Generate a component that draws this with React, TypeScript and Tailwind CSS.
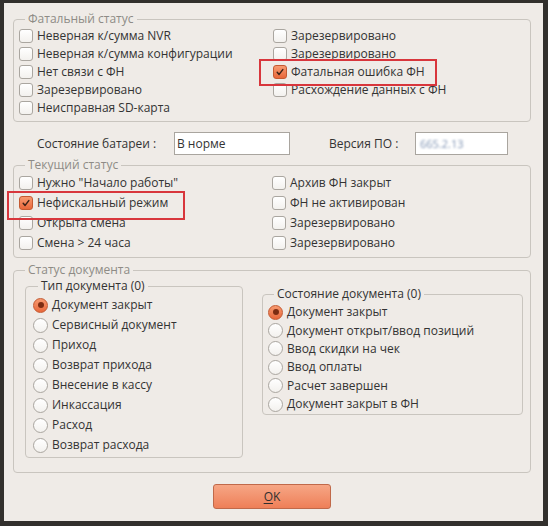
import React from "react";

const FONT = { fontFamily: '"Open Sans", "DejaVu Sans", sans-serif' };

function Check({ checked }: { checked?: boolean }) {
  return checked ? (
    <span className="w-[14px] h-[14px] rounded-[3px] border border-[#c45a32] bg-linear-to-b from-[#f79a70] to-[#e8673a] flex items-center justify-center shrink-0">
      <svg width="10" height="10" viewBox="0 0 10 10">
        <path d="M2.2 5.2 L4.1 7.4 L7.8 2.6" stroke="#3a2217" strokeWidth="1.5" fill="none" strokeLinecap="round" strokeLinejoin="round" />
      </svg>
    </span>
  ) : (
    <span className="w-[14px] h-[14px] rounded-[3px] border border-[#aaa6a0] bg-linear-to-b from-white to-[#f3f1ee] shrink-0" />
  );
}

function Radio({ checked }: { checked?: boolean }) {
  return checked ? (
    <span className="w-[15px] h-[15px] rounded-full border border-[#c45a32] bg-linear-to-b from-[#f79a70] to-[#e8673a] flex items-center justify-center shrink-0">
      <span className="w-[6px] h-[6px] rounded-full bg-[#7c2c12]" />
    </span>
  ) : (
    <span className="w-[15px] h-[15px] rounded-full border border-[#aaa6a0] bg-linear-to-b from-white to-[#f3f1ee] shrink-0" />
  );
}

function CRow({ label, checked, h = "h-[18px]" }: { label: string; checked?: boolean; h?: string }) {
  return (
    <div className={`flex items-center gap-[4px] ${h}`}>
      <Check checked={checked} />
      <span className="whitespace-nowrap">{label}</span>
    </div>
  );
}

function RRow({ label, checked, h }: { label: string; checked?: boolean; h: string }) {
  return (
    <div className={`flex items-center gap-[4px] ${h}`}>
      <Radio checked={checked} />
      <span className="whitespace-nowrap">{label}</span>
    </div>
  );
}

export default function App() {
  return (
    <div className="w-[548px] h-[526px] bg-[#32302d] overflow-hidden" style={FONT}>
      <div className="relative mt-[3px] ml-[4px] w-[539px] h-[518px] bg-[#efebe7] pl-[9px] pr-[12px] pt-[8px] text-[12px] leading-[16px] text-[#333333]">
        {/* Фатальный статус */}
        <fieldset className="border border-[#c9c5bf] rounded-[4px] pb-[4px]">
          <legend className="ml-[11px] px-[3px] text-[#8e8b86] leading-[16px]">Фатальный статус</legend>
          <div className="flex">
            <div className="w-[259px] pl-[5px] flex flex-col">
              <CRow label="Неверная к/сумма NVR" />
              <CRow label="Неверная к/сумма конфигурации" />
              <CRow label="Нет связи с ФН" />
              <CRow label="Зарезервировано" />
              <CRow label="Неисправная SD-карта" />
            </div>
            <div className="flex flex-col">
              <CRow label="Зарезервировано" />
              <CRow label="Зарезервировано" />
              <CRow label="Фатальная ошибка ФН" checked />
              <CRow label="Расхождение данных с ФН" />
            </div>
          </div>
        </fieldset>

        {/* Battery row */}
        <div className="flex items-center mt-[10px] h-[23px]">
          <span className="ml-[24px] w-[137px] whitespace-nowrap">Состояние батареи :</span>
          <div className="w-[116px] h-[23px] bg-white border border-[#a9a59f] pl-[2px] flex items-center">В норме</div>
          <span className="ml-[39px] w-[86px] whitespace-nowrap">Версия ПО :</span>
          <div className="w-[93px] h-[23px] bg-white border border-[#a9a59f] pl-[4px] flex items-center">
            <span className="blur-[1px] text-[#7f93b3] text-[11px]">665.2.13</span>
          </div>
        </div>

        {/* Текущий статус */}
        <fieldset className="border border-[#c9c5bf] rounded-[4px] pb-[4px] mt-[2px]">
          <legend className="ml-[11px] px-[3px] text-[#8e8b86] leading-[16px]">Текущий статус</legend>
          <div className="flex">
            <div className="w-[258px] pl-[5px] flex flex-col">
              <CRow h="h-[20px]" label={'Нужно "Начало работы"'} />
              <CRow h="h-[20px]" label="Нефискальный режим" checked />
              <CRow h="h-[20px]" label="Открыта смена" />
              <CRow h="h-[20px]" label="Смена > 24 часа" />
            </div>
            <div className="flex flex-col">
              <CRow h="h-[20px]" label="Архив ФН закрыт" />
              <CRow h="h-[20px]" label="ФН не активирован" />
              <CRow h="h-[20px]" label="Зарезервировано" />
              <CRow h="h-[20px]" label="Зарезервировано" />
            </div>
          </div>
        </fieldset>

        {/* Статус документа */}
        <fieldset className="border border-[#c9c5bf] rounded-[4px] pb-[14px] mt-[4px]">
          <legend className="ml-[11px] px-[3px] text-[#8e8b86] leading-[16px]">Статус документа</legend>
          <div className="flex items-start pl-[11px] pr-[7px]">
            <fieldset className="w-[218px] border border-[#c9c5bf] rounded-[4px] pb-[2px]">
              <legend className="ml-[12px] px-[3px] leading-[16px]">Тип документа (0)</legend>
              <div className="pl-[7px] pt-[1px] flex flex-col">
                <RRow h="h-[20px]" label="Документ закрыт" checked />
                <RRow h="h-[20px]" label="Сервисный документ" />
                <RRow h="h-[20px]" label="Приход" />
                <RRow h="h-[20px]" label="Возврат прихода" />
                <RRow h="h-[20px]" label="Внесение в кассу" />
                <RRow h="h-[20px]" label="Инкассация" />
                <RRow h="h-[20px]" label="Расход" />
                <RRow h="h-[20px]" label="Возврат расхода" />
              </div>
            </fieldset>
            <fieldset className="ml-[19px] mt-[8px] flex-1 border border-[#c9c5bf] rounded-[4px] pb-[1px]">
              <legend className="ml-[11px] px-[3px] leading-[16px]">Состояние документа (0)</legend>
              <div className="pl-[5px] pt-[1px] flex flex-col">
                <RRow h="h-[18.4px]" label="Документ закрыт" checked />
                <RRow h="h-[18.4px]" label="Документ открыт/ввод позиций" />
                <RRow h="h-[18.4px]" label="Ввод скидки на чек" />
                <RRow h="h-[18.4px]" label="Ввод оплаты" />
                <RRow h="h-[18.4px]" label="Расчет завершен" />
                <RRow h="h-[18.4px]" label="Документ закрыт в ФН" />
              </div>
            </fieldset>
          </div>
        </fieldset>

        {/* OK */}
        <div className="flex justify-center mt-[11px]">
          <button className="w-[118px] h-[25px] rounded-[3px] border border-[#c0694a] bg-linear-to-b from-[#f6a685] to-[#ee7f58] text-[#2f2f2f] text-[12px] flex items-center justify-center">
            <span><span className="underline underline-offset-2">O</span>K</span>
          </button>
        </div>

        {/* Red annotation frames */}
        <div className="absolute left-[255px] top-[56px] w-[178px] h-[27px] border-2 border-[#d8363c] pointer-events-none" />
        <div className="absolute left-[3px] top-[188px] w-[178px] h-[29px] border-2 border-[#d8363c] pointer-events-none" />
      </div>
    </div>
  );
}
